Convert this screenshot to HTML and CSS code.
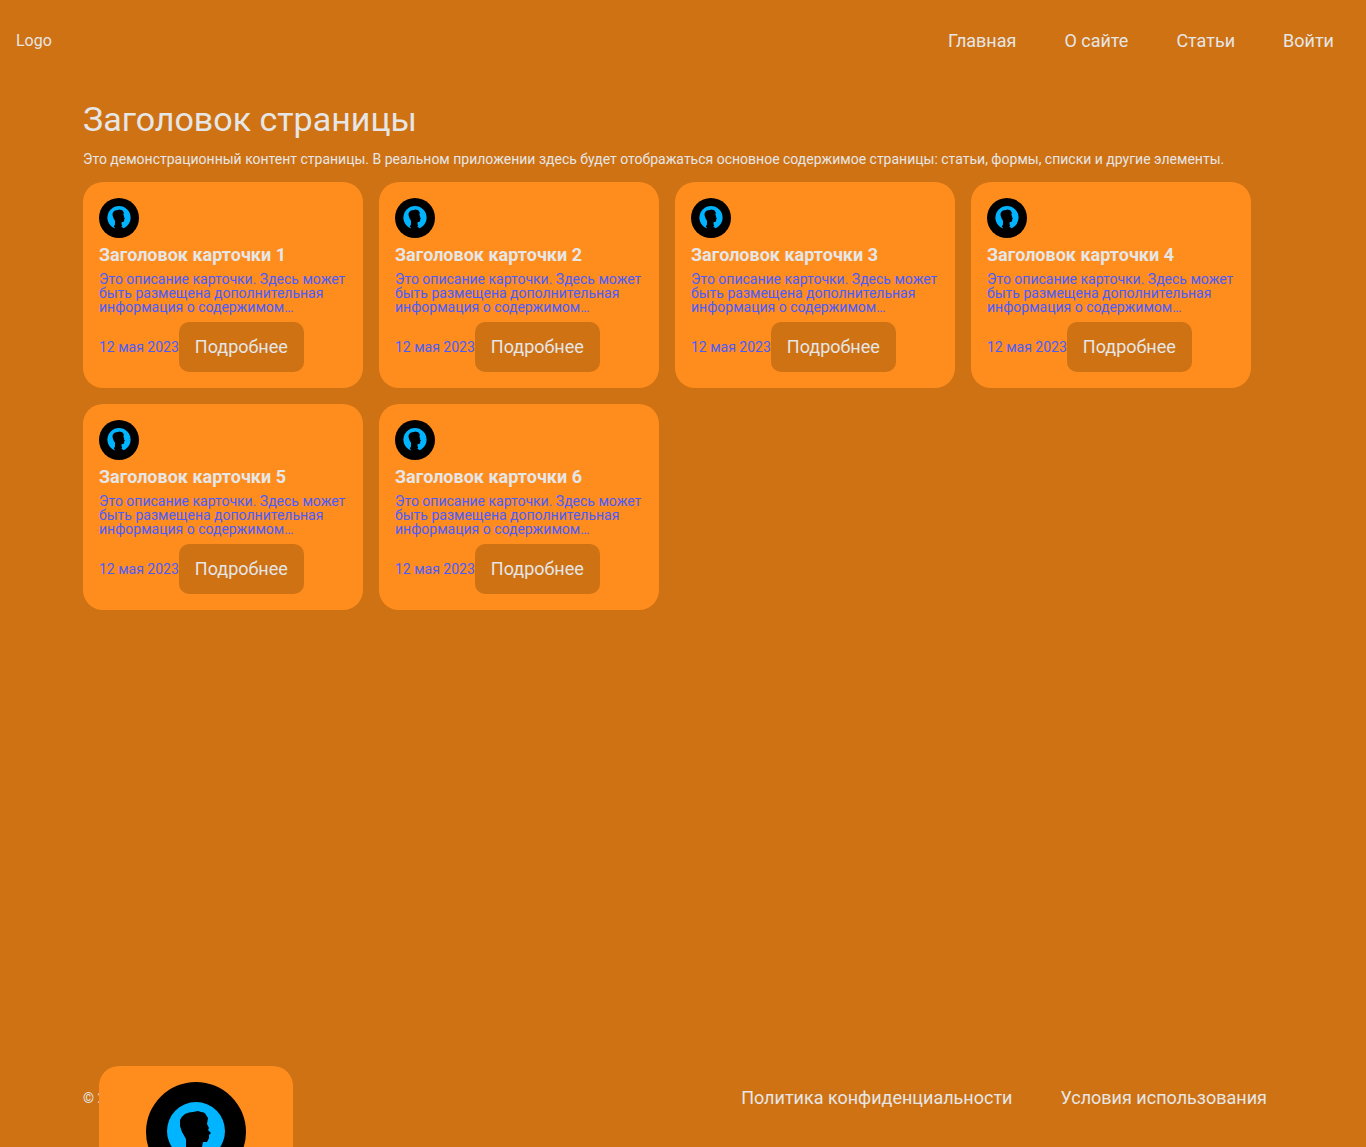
FILE: index.html
```html
<!DOCTYPE html>
<html lang="ru">
<head>
  <meta charset="utf-8">
  <meta name="viewport" content="width=device-width, initial-scale=1">
  <title>Заголовок страницы</title>
  <link rel="stylesheet" href="styles.css">
</head>
<body>
  <svg class="sprite" aria-hidden="true">
    <symbol id="avatar" viewBox="0 0 100 100">
      <circle cx="50" cy="50" r="50" fill="#000"/>
      <circle cx="50" cy="49" r="29" fill="#00b4ff"/>
      <path fill="#000" d="M39 32 Q43 30 47 30 L52 29 L55 30 Q59 30 60 33 L62 36 L61 42 L63 46 L62 48 L65 51 L63 53 L63 56 L61 60 L57 60 L56 65 L58 69 L56 72 L61 75 L61 80 L38 80 L40 75 L37 71 L40 66 L40 57 L36 50 L34 44 L34 38 Q36 34 39 32Z"/>
    </symbol>
  </svg>

  <header class="header">
    <span class="logo">Logo</span>
    <nav class="nav">
      <a class="link" href="#">Главная</a>
      <a class="link" href="#">О сайте</a>
      <a class="link" href="#">Статьи</a>
      <a class="link" href="#">Войти</a>
    </nav>
  </header>

  <main class="container main">
    <h1 class="title">Заголовок страницы</h1>
    <p class="intro">Это демонстрационный контент страницы. В реальном приложении здесь будет отображаться основное содержимое страницы: статьи, формы, списки и другие элементы.</p>
    <div class="cards">
      <article class="card">
        <svg class="avatar" aria-hidden="true"><use href="#avatar"/></svg>
        <h2 class="card-title">Заголовок карточки 1</h2>
        <p class="card-text">Это описание карточки. Здесь может быть размещена дополнительная информация о содержимом…</p>
        <div class="card-footer"><time datetime="2023-05-12">12 мая 2023</time><button class="button" type="button">Подробнее</button></div>
      </article>
      <article class="card">
        <svg class="avatar" aria-hidden="true"><use href="#avatar"/></svg>
        <h2 class="card-title">Заголовок карточки 2</h2>
        <p class="card-text">Это описание карточки. Здесь может быть размещена дополнительная информация о содержимом…</p>
        <div class="card-footer"><time datetime="2023-05-12">12 мая 2023</time><button class="button" type="button">Подробнее</button></div>
      </article>
      <article class="card">
        <svg class="avatar" aria-hidden="true"><use href="#avatar"/></svg>
        <h2 class="card-title">Заголовок карточки 3</h2>
        <p class="card-text">Это описание карточки. Здесь может быть размещена дополнительная информация о содержимом…</p>
        <div class="card-footer"><time datetime="2023-05-12">12 мая 2023</time><button class="button" type="button">Подробнее</button></div>
      </article>
      <article class="card">
        <svg class="avatar" aria-hidden="true"><use href="#avatar"/></svg>
        <h2 class="card-title">Заголовок карточки 4</h2>
        <p class="card-text">Это описание карточки. Здесь может быть размещена дополнительная информация о содержимом…</p>
        <div class="card-footer"><time datetime="2023-05-12">12 мая 2023</time><button class="button" type="button">Подробнее</button></div>
      </article>
      <article class="card">
        <svg class="avatar" aria-hidden="true"><use href="#avatar"/></svg>
        <h2 class="card-title">Заголовок карточки 5</h2>
        <p class="card-text">Это описание карточки. Здесь может быть размещена дополнительная информация о содержимом…</p>
        <div class="card-footer"><time datetime="2023-05-12">12 мая 2023</time><button class="button" type="button">Подробнее</button></div>
      </article>
      <article class="card">
        <svg class="avatar" aria-hidden="true"><use href="#avatar"/></svg>
        <h2 class="card-title">Заголовок карточки 6</h2>
        <p class="card-text">Это описание карточки. Здесь может быть размещена дополнительная информация о содержимом…</p>
        <div class="card-footer"><time datetime="2023-05-12">12 мая 2023</time><button class="button" type="button">Подробнее</button></div>
      </article>
    </div>
  </main>

  <footer class="footer">
    <div class="container footer-row">
      <p class="copyright">© 2023</p>
      <nav class="nav">
        <a class="link" href="#">Политика конфиденциальности</a>
        <a class="link" href="#">Условия использования</a>
      </nav>
      <aside class="profile">
        <svg class="avatar avatar-large" aria-hidden="true"><use href="#avatar"/></svg>
      </aside>
    </div>
  </footer>
</body>
</html>
```
FILE: styles.css
```css
:root {
  --bg: #ce7214;
  --surface: #fe8d1e;
  --text: #e6e6e6;
  --accent: #4a5cff;
}

* {
  box-sizing: border-box;
  margin: 0;
}

body {
  display: flex;
  flex-direction: column;
  min-height: 100vh;
  background: var(--bg);
  color: var(--text);
  font: 14px/1 Roboto, sans-serif;
}

.sprite {
  display: none;
}

.container {
  width: 100%;
  max-width: 1200px;
  margin: 0 auto;
}

.header {
  display: flex;
  align-items: center;
  justify-content: space-between;
  padding: 16px;
}

.logo {
  font-size: 16px;
}

.nav {
  display: flex;
  flex-wrap: wrap;
  gap: 16px;
}

.link {
  padding: 16px;
  color: inherit;
  font-size: 18px;
  text-decoration: none;
}

.main {
  display: flex;
  flex: 1;
  flex-direction: column;
  gap: 16px;
  padding: 20px 0 16px;
}

.title {
  font-size: 34px;
  font-weight: 400;
}

.cards {
  display: flex;
  flex-wrap: wrap;
  gap: 16px;
}

.card {
  display: flex;
  flex-direction: column;
  gap: 8px;
  width: 280px;
  padding: 16px;
  border-radius: 20px;
  background: var(--surface);
}

.avatar {
  width: 40px;
  height: 40px;
}

.card-title {
  font-size: 18px;
  font-weight: 700;
}

.card-text,
.card-footer {
  color: var(--accent);
}

.card-footer {
  display: flex;
  align-items: center;
}

.button {
  padding: 16px;
  border: 0;
  border-radius: 10px;
  background: var(--bg);
  color: var(--text);
  font: 18px/1 Roboto, sans-serif;
}

.footer {
  overflow: hidden;
}

.footer-row {
  position: relative;
  display: flex;
  align-items: center;
  justify-content: space-between;
  padding: 24px 0;
}

.profile {
  position: absolute;
  top: 17px;
  left: 16px;
  display: flex;
  flex-direction: column;
  align-items: center;
  width: 194px;
  padding: 16px;
  border-radius: 20px;
  background: var(--surface);
}

.avatar-large {
  width: 100px;
  height: 100px;
}
```
